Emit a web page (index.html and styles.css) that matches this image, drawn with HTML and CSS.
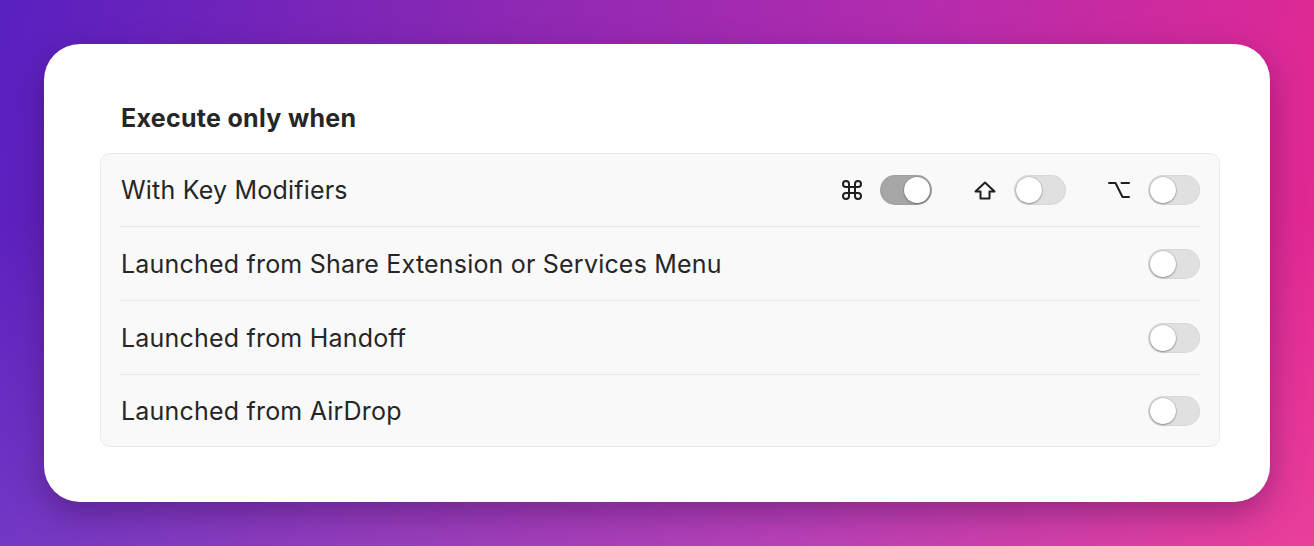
FILE: index.html
```html
<!DOCTYPE html>
<html lang="en">
  <head>
    <title>Execute only when</title>
    <meta charset="UTF-8" />
    <meta name="viewport" content="width=device-width" />
    <link rel="stylesheet" href="styles.css">
  </head>
  <body>
    <main class="card">
      <h2 class="section-title">Execute only when</h2>
      <div class="group">
        <div class="row">
          <span class="row-label">With Key Modifiers</span>
          <div class="modifiers">
            <div class="modifier">
              <svg class="key-icon" width="20" height="20" viewBox="2 2 20 20" aria-label="Command">
                <path d="M15 6v12a3 3 0 1 0 3-3H6a3 3 0 1 0 3 3V6a3 3 0 1 0-3 3h12a3 3 0 1 0-3-3" />
              </svg>
              <span class="toggle is-on"></span>
            </div>
            <div class="modifier">
              <svg class="key-icon" width="22" height="19" viewBox="0 0 22 19" aria-label="Shift">
                <path d="M11 1.5 20.5 10.5h-5v7h-9v-7h-5z" />
              </svg>
              <span class="toggle"></span>
            </div>
            <div class="modifier">
              <svg class="key-icon" width="22" height="18" viewBox="0 0 22 18" aria-label="Option">
                <path d="M1 2h6.5l7 14H21M13.5 2H21" />
              </svg>
              <span class="toggle"></span>
            </div>
          </div>
        </div>
        <div class="row">
          <span class="row-label">Launched from Share Extension or Services Menu</span>
          <span class="toggle"></span>
        </div>
        <div class="row">
          <span class="row-label">Launched from Handoff</span>
          <span class="toggle"></span>
        </div>
        <div class="row">
          <span class="row-label">Launched from AirDrop</span>
          <span class="toggle"></span>
        </div>
      </div>
    </main>
  </body>
</html>
```

FILE: styles.css
```css
* {
  box-sizing: border-box;
}

html,
body {
  height: 100%;
}

body {
  margin: 0;
  font-family: Inter, "Noto Sans", sans-serif;
  color: #262626;
  background:
    linear-gradient(180deg, rgba(255, 255, 255, 0) 40%, rgba(255, 255, 255, 0.1) 100%),
    linear-gradient(100deg, #5820c0 0%, #8b28b4 35%, #b32cae 65%, #e8288f 100%);
  padding: 44px 44px 0 44px;
  overflow: hidden;
}

.card {
  width: 1226px;
  height: 458px;
  background: #fff;
  border-radius: 36px;
  padding: 59px 50px 56px 56px;
  box-shadow: 0 12px 32px rgba(40, 0, 60, 0.35);
}

.section-title {
  margin: 0 0 20px 21px;
  font-size: 25px;
  line-height: 30px;
  font-weight: 700;
  letter-spacing: 0.3px;
  color: #262626;
}

.group {
  background: #f9f9f9;
  border: 1px solid #ebebeb;
  border-radius: 10px;
}

.row {
  display: flex;
  align-items: center;
  justify-content: space-between;
  height: 74px;
  margin: 0 19px;
  border-bottom: 1px solid #e8e8e8;
}

.row:first-child {
  height: 73px;
}

.row:last-child {
  height: 71px;
  border-bottom: none;
}

.row-label {
  font-size: 25px;
  letter-spacing: 0.2px;
  padding-left: 1px;
}

.modifiers {
  display: flex;
  align-items: center;
  gap: 42px;
}

.modifier {
  display: flex;
  align-items: center;
  gap: 18px;
}

.key-icon {
  fill: none;
  stroke: #1f1f1f;
  stroke-width: 2;
  stroke-linejoin: round;
  stroke-linecap: round;
}

.toggle {
  position: relative;
  display: block;
  width: 52px;
  height: 30px;
  border-radius: 15px;
  background: #e0e0e0;
  box-shadow: inset 0 0 0 1px rgba(0, 0, 0, 0.04);
}

.toggle::after {
  content: "";
  position: absolute;
  top: 2px;
  left: 2px;
  width: 26px;
  height: 26px;
  border-radius: 50%;
  background: #fff;
  box-shadow: 0 0 0 0.5px rgba(0, 0, 0, 0.2), 0 1px 2px rgba(0, 0, 0, 0.3);
}

.toggle.is-on {
  background: #a6a6a6;
}

.toggle.is-on::after {
  left: 24px;
}
```
